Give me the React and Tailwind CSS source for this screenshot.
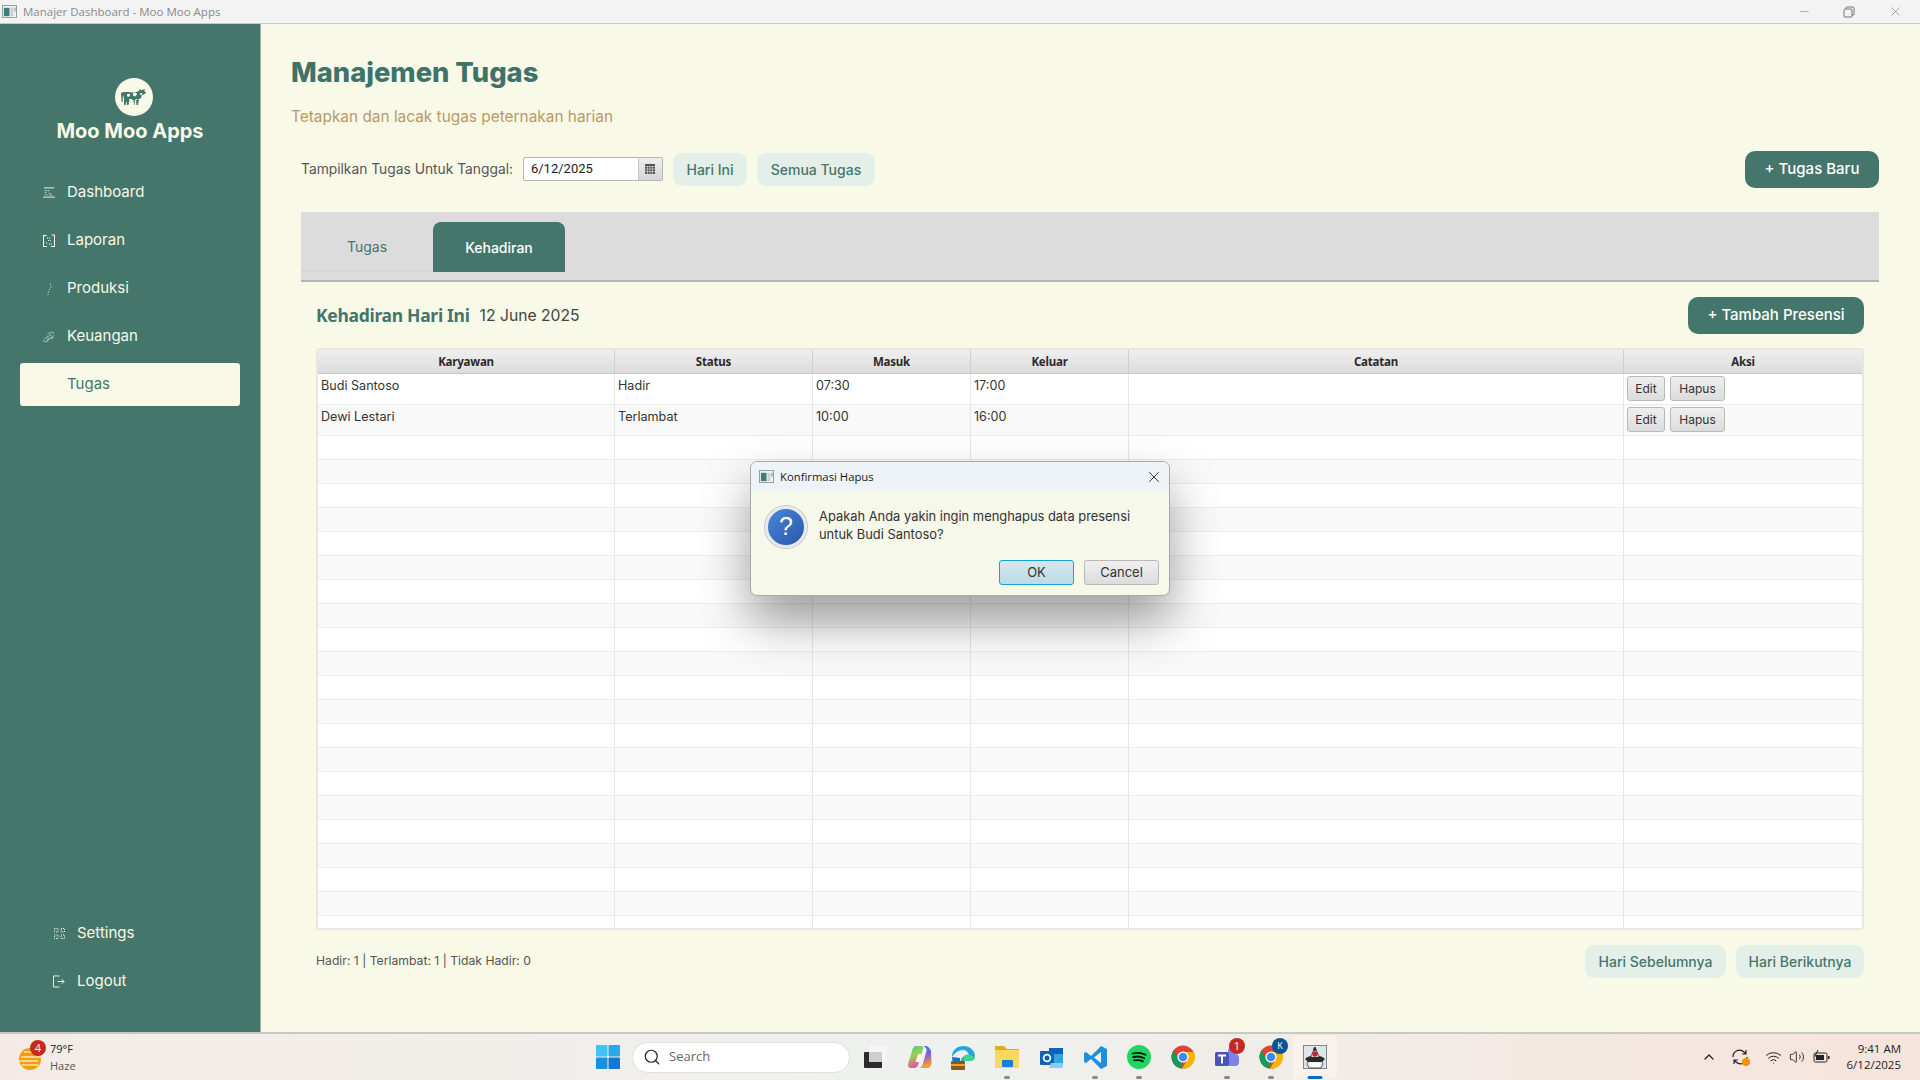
import React from 'react';
import { Minus, X, Search, ChevronUp, Wifi, Volume2 } from 'lucide-react';

const P = '[font-family:Inter,sans-serif]';

function AppIcon({ size = 16 }) {
  return (
    <svg width={size} height={size * 0.87} viewBox="0 0 16 14" className="shrink-0">
      <rect x="0.5" y="0.5" width="15" height="13" fill="#f0f2f2" stroke="#8d9a9a" />
      <rect x="2" y="3" width="6" height="9" fill="#3f7d78" />
      <rect x="9" y="3" width="3" height="9" fill="#c8d0d4" />
      <rect x="13" y="3" width="1.5" height="4" fill="#9aa7ab" />
    </svg>
  );
}

function Cow() {
  return (
    <svg width="27" height="20" viewBox="0 0 27 20">
      <path fill="#45766c" d="M1 6c1-1 3-1 5-1 4 0 7 1 10 0l3-1 1-2 1 1h2l1-1 1 0-1 2 2 1-1 2-3 1-1 3-2 1-1 6h-1.500l-.5-5-1 0-.5 5H14l-.5-5-4 0-1 5H7l-.5-4-1 4H4l0-7-1-3-.5 7H1.500z" />
      <path fill="#f8f9e6" d="M7 7h3v2l-2 1-1-1zM13 6l3-.5 1 2-2 2-2-1zM20 6h2v1.500l-1.500 1zM9 12h3v1H9zM15.500 12h2v1h-2z" />
    </svg>
  );
}

function NavIcon({ type }) {
  const c = '#f8f9e6';
  if (type === 'dashboard')
    return (
      <svg width="13" height="11" viewBox="0 0 13 11">
        <path d="M1 .5h11M0 10.500h13" stroke={c} strokeWidth="1" />
        <path d="M2 3.500h5M2 5.500h2M2 8h3M6 6.500h3M7 8.500h4" stroke={c} strokeWidth="1" strokeDasharray="1 .8" />
      </svg>
    );
  if (type === 'laporan')
    return (
      <svg width="12" height="13" viewBox="0 0 12 13">
        <path d="M.5 2v10.500h3.500M11.500 .5v12H8M0 1.500h3.500M8.500 1h3" stroke={c} fill="none" strokeWidth="1.100" />
        <path d="M4 4h4M5 6.500h3M3 9h2M6 10h3" stroke={c} strokeDasharray="1 .8" />
      </svg>
    );
  if (type === 'produksi')
    return (
      <svg width="6" height="12" viewBox="0 0 6 12">
        <path d="M4 1h1M4.500 4h1M3 6.500h1M2 9h1M1.500 11.500h1" stroke={c} strokeWidth=".9" />
      </svg>
    );
  if (type === 'keuangan')
    return (
      <svg width="13" height="12" viewBox="0 0 13 12">
        <path d="M0 10l3 1.500 4-3M1.500 8l5-3 3-2M5 3l4-2.500 3 1.500M4 9l6-3 2-2M9 8l3-2" stroke={c} strokeWidth="1" strokeDasharray="1.100 .7" fill="none" />
      </svg>
    );
  if (type === 'settings')
    return (
      <svg width="11" height="11" viewBox="0 0 11 11">
        <path d="M.5.500h3.500v3.500H.5zM7 .500h3.500v3.500H7zM.5 7h3.500v3.500H.5zM7 7h3.500v3.500H7z" stroke={c} strokeDasharray="1 1" fill="none" />
      </svg>
    );
  return (
    <svg width="13" height="13" viewBox="0 0 13 13">
      <path d="M7 .5H.5v12H7M5 6.500h7M9.500 4l2.500 2.500L9.500 9" stroke={c} fill="none" />
    </svg>
  );
}

function NavItem({ type, label, active }) {
  return (
    <div className={`flex h-[43px] items-center rounded-[3px] pl-[23px] gap-[12px] text-[15px] ${active ? 'bg-[#f8f9e6] text-[#45766c]' : 'text-[#f8f9e6]'}`}>
      <span className="flex w-[12px] justify-center">{type && <NavIcon type={type} />}</span>
      <span>{label}</span>
    </div>
  );
}

function Soft({ children, className = '' }) {
  return <div className={`flex h-[33px] items-center justify-center rounded-[9px] bg-[#e5efe9] text-[14px] font-medium text-[#45766c] ${className}`}>{children}</div>;
}

function Primary({ children, className = '' }) {
  return <div className={`flex h-[37px] items-center justify-center rounded-[10px] bg-[#45766c] text-[15px] font-medium text-white ${className}`}>{children}</div>;
}

const cols = ['w-[297px]', 'w-[198px]', 'w-[158px]', 'w-[158px]', 'w-[495px]', 'flex-1'];
const heads = ['Karyawan', 'Status', 'Masuk', 'Keluar', 'Catatan', 'Aksi'];
const rows = [
  ['Budi Santoso', 'Hadir', '07:30', '17:00', ''],
  ['Dewi Lestari', 'Terlambat', '10:00', '16:00', ''],
];

function MiniBtn({ children, className }) {
  return <div className={`flex h-[25px] items-center justify-center rounded-[3px] border border-[#b8b8b8] bg-gradient-to-b from-[#efefef] to-[#dcdcdc] text-[12px] text-[#333] ${className}`}>{children}</div>;
}

function Table() {
  return (
    <div className="mx-[15px] h-[582px] overflow-hidden rounded-[4px] border-2 border-[#e6e6e2] bg-white">
      <div className="flex h-[24px] border-b border-[#c8c8c8] bg-gradient-to-b from-[#efefef] to-[#dcdcdc]">
        {heads.map((h, i) => (
          <div key={h} className={`${cols[i]} flex items-center justify-center border-r border-[#cfcfcf] text-[11.5px] font-bold text-[#2d2a2a] [font-family:'Noto_Sans',sans-serif] tracking-[-0.2px] last:border-r-0`}>{h}</div>
        ))}
      </div>
      {rows.map((r, ri) => (
        <div key={ri} className={`flex h-[31px] border-b border-[#ececec] ${ri % 2 ? 'bg-[#f9f9f9]' : 'bg-white'}`}>
          {r.map((c, i) => (
            <div key={i} className={`${cols[i]} border-r border-[#e6e6e6] pl-[3px] pt-[3px] text-[12.6px] leading-[18px] text-[#333]`}>{c}</div>
          ))}
          <div className="flex flex-1 gap-[5px] pl-[3px] pt-[2px]">
            <MiniBtn className="w-[38px]">Edit</MiniBtn>
            <MiniBtn className="w-[55px]">Hapus</MiniBtn>
          </div>
        </div>
      ))}
      {Array.from({ length: 21 }).map((_, ri) => (
        <div key={ri} className={`flex h-[24px] border-b border-[#ececec] ${ri % 2 ? 'bg-[#f9f9f9]' : 'bg-white'}`}>
          {cols.map((w, i) => (
            <div key={i} className={`${w} border-r border-[#e6e6e6] last:border-r-0`} />
          ))}
        </div>
      ))}
    </div>
  );
}

function Dialog() {
  return (
    <div className="absolute left-[750px] top-[461px] z-10 w-[420px] overflow-hidden rounded-[7px] border border-[#a9a9a9] bg-[#f6f8ea] shadow-[0_26px_50px_rgba(0,0,0,0.38)]">
      <div className="flex h-[30px] items-center bg-[#eef3f7] pl-[8px] pr-[6px]">
        <AppIcon size={15} />
        <span className="ml-[6px] text-[11.3px] text-[#1a1a1a] [font-family:'Open_Sans',sans-serif]">Konfirmasi Hapus</span>
        <X className="ml-auto text-[#222]" size={18} strokeWidth={1.2} />
      </div>
      <div className="flex h-[57px] items-start pl-[14px] pt-[14px]">
        <div className="flex h-[42px] w-[42px] shrink-0 items-center justify-center rounded-full border-[3px] border-[#e6e8ee] bg-gradient-to-br from-[#4a86d8] to-[#2b57ab] text-[25px] text-white [font-family:'Liberation_Sans',sans-serif] shadow-[0_0_0_1px_#c3c6cc]">?</div>
        <div className="ml-[12px] pt-[2px] text-[12.9px] leading-[18px] text-[#333]">
          <div>Apakah Anda yakin ingin menghapus data presensi</div>
          <div>untuk Budi Santoso?</div>
        </div>
      </div>
      <div className="flex justify-end gap-[10px] pr-[10px] pb-[10px] pt-[11px]">
        <div className="flex h-[25px] w-[75px] items-center justify-center rounded-[3px] border border-[#16a2d8] bg-gradient-to-b from-[#d4e7ee] to-[#bddbe7] text-[13px] text-[#333]">OK</div>
        <div className="flex h-[25px] w-[75px] items-center justify-center rounded-[3px] border border-[#b8b8b8] bg-gradient-to-b from-[#f0f0f0] to-[#dcdcdc] text-[13px] text-[#333]">Cancel</div>
      </div>
    </div>
  );
}

function TaskSlot({ children, dot, active }) {
  return (
    <div className={`relative flex h-[44px] w-[44px] items-center justify-center rounded-[4px] ${active ? 'bg-[#fbf1eb]' : ''}`}>
      {children}
      {dot && <span className="absolute bottom-[0px] left-1/2 h-[3px] w-[6px] -translate-x-1/2 rounded-full bg-[#8a8a8a]" />}
      {active && <span className="absolute bottom-[0px] left-1/2 h-[3px] w-[15px] -translate-x-1/2 rounded-full bg-[#0a6cc4]" />}
    </div>
  );
}

function Chrome() {
  return (
    <svg width="24" height="24" viewBox="0 0 24 24">
      <circle cx="12" cy="12" r="11.500" fill="#db4437" />
      <path d="M12 7h10.800A11.500 11.500 0 0 1 11 23.500L16.300 14.500z" fill="#f4b400" />
      <path d="M12 12 11 23.500A11.500 11.500 0 0 1 2.500 5.500L7.700 14.500z" fill="#0f9d58" />
      <circle cx="12" cy="12" r="5.600" fill="#fff" />
      <circle cx="12" cy="12" r="4.300" fill="#4285f4" />
    </svg>
  );
}

function Taskbar() {
  return (
    <div className="relative flex h-[48px] items-center border-t-2 border-[#c9c8c3] bg-gradient-to-r from-[#f4ebe6] via-[#eef1ee] to-[#f6e4dc] [font-family:'Open_Sans',sans-serif]">
      <div className="flex w-[583px] shrink-0 items-center pl-[18px]">
        <div className="relative h-[30px] w-[33px]">
          <svg width="24" height="24" viewBox="0 0 24 24" className="absolute left-0 top-[5px]">
            <circle cx="12" cy="12" r="11" fill="#f39c12" />
            <path d="M6 5h14M3 10h20M0 14h20M4 18h16" stroke="#f7e8b0" strokeWidth="1.600" />
          </svg>
          <span className="absolute left-[12px] top-[-2px] flex h-[16px] w-[16px] items-center justify-center rounded-full bg-[#c42b1c] text-[11px] text-white">4</span>
        </div>
        <div className="ml-[-1px] text-[11px] leading-[17px] text-[#222]">
          <div>79°F</div>
          <div className="text-[#555]">Haze</div>
        </div>
      </div>
      <div className="flex w-[49px] justify-center">
        <svg width="24" height="24" viewBox="0 0 24 24">
          <rect x="0" y="0" width="11.500" height="11.500" rx="1" fill="#3cc5f5" />
          <rect x="12.500" y="0" width="11.500" height="11.500" rx="1" fill="#29a8ea" />
          <rect x="0" y="12.500" width="11.500" height="11.500" rx="1" fill="#1a8fdf" />
          <rect x="12.500" y="12.500" width="11.500" height="11.500" rx="1" fill="#0f78d4" />
        </svg>
      </div>
      <div className="flex h-[31px] w-[218px] items-center rounded-full border border-[#e0e0de] bg-white pl-[10px] text-[13px] text-[#666]">
        <Search size={18} strokeWidth={1.600} className="text-[#222]" />
        <span className="ml-[8px]">Search</span>
      </div>
      <div className="ml-[3px] flex">
        <TaskSlot>
          <svg width="24" height="24" viewBox="0 0 24 24">
            <rect x="6" y="1" width="18" height="16" fill="#f6f6f6" />
            <rect x="1" y="7" width="18" height="16" rx="1" fill="#2b2b2b" />
            <rect x="6" y="7" width="13" height="10" fill="#cfcfcf" />
          </svg>
        </TaskSlot>
        <TaskSlot>
          <svg width="25" height="24" viewBox="0 0 25 24">
            <defs>
              <linearGradient id="copA" x1="0" y1="0" x2="0.3" y2="1">
                <stop offset="0" stopColor="#3fc8a0" />
                <stop offset=".5" stopColor="#9ad24a" />
                <stop offset="1" stopColor="#e94fa0" />
              </linearGradient>
              <linearGradient id="copB" x1="0" y1="0" x2="0.2" y2="1">
                <stop offset="0" stopColor="#1d86e0" />
                <stop offset=".5" stopColor="#8a5ae0" />
                <stop offset="1" stopColor="#f7a02a" />
              </linearGradient>
            </defs>
            <path d="M9 1h5c2 0 2.500 1.500 2 3l-5 16c-.6 2-2 3-4 3H4C1.500 23 .5 21 1 19L5 6c.7-3 2-5 4-5z" fill="url(#copA)" />
            <path d="M15 1h3c3 0 5 2 6 5l.5 12c.2 3-2 5-4 5h-9c2 0 3.500-1.500 4-3l4-14c.5-2-.5-4-3.500-5z" fill="url(#copB)" />
            <path d="M11 9h5l-2.500 8h-5z" fill="#f6f2f5" />
          </svg>
        </TaskSlot>
        <TaskSlot>
          <svg width="25" height="25" viewBox="0 0 25 25">
            <path d="M1 12C1 5 6 1 12.500 1S24 6 24 11c0 4-3 5-6 5H10c0-4 4-6 8-6-1-3-3-5-6-5-5 0-8 3-11 7z" fill="#27a4d8" />
            <path d="M13 11c2-2 6-2 8 0l3 1c0 3-3 4-6 4h-6z" fill="#4ad08e" />
            <path d="M1 12c0 6 4 11 8 12l0-11z" fill="#1b6fc2" />
            <rect x="0" y="16" width="14" height="9" rx="1" fill="#8a5a1c" />
            <rect x="0" y="19" width="14" height="2" fill="#e2a33c" />
          </svg>
        </TaskSlot>
        <TaskSlot dot>
          <svg width="26" height="24" viewBox="0 0 26 24">
            <path d="M1 1h9l3 3h12v19H1z" fill="#e0a92a" />
            <path d="M1 5h24v18H1z" fill="#fbd85d" />
            <rect x="8" y="15" width="11" height="7" rx="1" fill="#1b7ed6" />
          </svg>
        </TaskSlot>
        <TaskSlot>
          <svg width="25" height="25" viewBox="0 0 25 25">
            <path d="M10 3h11l3 3v12H10z" fill="#2ca8e8" />
            <path d="M10 3h14v6H10z" fill="#0f62b8" />
            <rect x="1" y="6" width="14" height="14" rx="1" fill="#0f62b8" />
            <circle cx="8" cy="13" r="3.400" fill="none" stroke="#fff" strokeWidth="1.800" />
            <path d="M12 18h12v3a2 2 0 0 1-2 2H10z" fill="#7ed3f7" />
          </svg>
        </TaskSlot>
        <TaskSlot dot>
          <svg width="25" height="25" viewBox="0 0 25 25">
            <path d="M18 1 24 4v17l-6 3L8 14l-5 4-2-1V8l2-1 5 4z" fill="#1e8fdc" />
            <path d="M18 7 11 12.500 18 18z" fill="#f4f6f4" />
          </svg>
        </TaskSlot>
        <TaskSlot dot>
          <svg width="24" height="24" viewBox="0 0 24 24">
            <circle cx="12" cy="12" r="12" fill="#1ed760" />
            <path d="M5.500 8.500c4-1 9-.8 13 1.300M6.200 12c3.500-.8 8-.5 11 1.200M7 15.400c3-.6 6.500-.4 9 1" stroke="#111" strokeWidth="1.800" strokeLinecap="round" fill="none" />
          </svg>
        </TaskSlot>
        <TaskSlot><Chrome /></TaskSlot>
        <TaskSlot dot>
          <svg width="26" height="24" viewBox="0 0 26 24">
            <circle cx="18" cy="6" r="4" fill="#7b83eb" />
            <rect x="13" y="9" width="12" height="12" rx="4" fill="#7b83eb" />
            <rect x="1" y="7" width="14" height="14" rx="1.500" fill="#4b53bc" />
            <path d="M4 10.500h8M8 10.500v8" stroke="#fff" strokeWidth="2" />
          </svg>
          <span className="absolute right-[4px] top-[3px] flex h-[16px] w-[16px] items-center justify-center rounded-full bg-[#c42b1c] text-[11px] text-white">1</span>
        </TaskSlot>
        <TaskSlot dot>
          <Chrome />
          <span className="absolute right-[5px] top-[3px] flex h-[16px] w-[16px] items-center justify-center rounded-full bg-[#0b5394] text-[9px] text-white">K</span>
        </TaskSlot>
        <TaskSlot active>
          <svg width="24" height="24" viewBox="0 0 24 24">
            <rect x=".5" y=".5" width="23" height="23" fill="#dfe5ea" stroke="#7c8a90" />
            <path d="M12 2 15 9l5 10-2 4H6l-2-4L9 9z" fill="#f0f0f0" stroke="#333" strokeWidth=".8" />
            <path d="M10.500 3 12 2l1.500 3.500-3 .5z" fill="#222" />
            <circle cx="12" cy="9" r="2.800" fill="#c8242b" />
            <path d="M2 14c3-3 5-3.500 8-2l4 0c3-1.500 5-1 8 2l-3 3H5z" fill="#2a2a2a" />
            <path d="M7 18h10v4H7z" fill="#fafafa" />
          </svg>
        </TaskSlot>
      </div>
      <div className="ml-auto flex items-center pr-[19px] text-[#1d1d1d]">
        <ChevronUp size={16} strokeWidth={1.800} className="mr-[14px]" />
        <div className="relative mr-[16px] h-[18px] w-[18px]">
          <svg width="18" height="18" viewBox="0 0 18 18" fill="none" stroke="#222" strokeWidth="1.200">
            <path d="M2 9a6.500 6.500 0 0 1 11-5l2 2M15 2v4h-4M16 9a6.500 6.500 0 0 1-11 5l-2-2M3 16v-4h4" />
          </svg>
          <span className="absolute bottom-[0px] right-[-1px] h-[8px] w-[8px] rounded-full bg-[#f59300]" />
        </div>
        <Wifi size={17} strokeWidth={1.400} className="mr-[7px]" />
        <Volume2 size={16} strokeWidth={1.300} className="mr-[8px]" />
        <svg width="17" height="14" viewBox="0 0 17 14" className="mr-[17px]">
          <rect x="1" y="3" width="13" height="9" rx="1.500" fill="none" stroke="#222" />
          <rect x="3" y="5" width="8" height="5" fill="#222" />
          <rect x="15" y="6" width="1.500" height="3" fill="#222" />
          <path d="M5 0 2 6h3L3 10" stroke="#222" fill="none" />
        </svg>
        <div className="text-right text-[11.5px] leading-[16px]">
          <div>9:41 AM</div>
          <div>6/12/2025</div>
        </div>
      </div>
    </div>
  );
}

export default function App() {
  return (
    <div className={`relative flex h-[1080px] w-[1920px] flex-col overflow-hidden bg-[#f8f9e6] ${P}`}>
      <div className="flex h-[24px] shrink-0 items-center border-b border-[#c8c8c8] bg-[#f3f3f3] pl-[2px] [font-family:'Open_Sans',sans-serif]">
        <AppIcon size={15} />
        <span className="ml-[6px] text-[11.5px] text-[#8a8a8a]">Manajer Dashboard - Moo Moo Apps</span>
        <div className="ml-auto flex items-center text-[#777]">
          <Minus size={13} strokeWidth={1} className="mr-[32px]" />
          <svg width="12" height="12" viewBox="0 0 12 12" fill="none" stroke="#777" className="mr-[33px]">
            <rect x="1" y="3" width="8" height="8" rx="1" />
            <path d="M3 3V1.500A.5.5 0 0 1 3.500 1H10a1 1 0 0 1 1 1v6.500a.5.5 0 0 1-.5.5H9" />
          </svg>
          <X size={15} strokeWidth={1} className="mr-[17px]" />
        </div>
      </div>
      <div className="flex min-h-0 flex-1">
        <aside className="flex w-[261px] shrink-0 flex-col border-r border-[#9fb3ab] bg-[#45766c] px-[20px]">
          <div className="flex flex-col items-center pl-[7px] pt-[54px]">
            <div className="flex h-[38px] w-[38px] items-center justify-center rounded-full bg-[#f8f9e6]">
              <Cow />
            </div>
            <div className="-ml-[7px] mt-[1px] text-[20px] font-bold leading-[28px] text-[#f8f9e6]">Moo Moo Apps</div>
          </div>
          <nav className="mt-[26px] flex flex-col gap-[5px]">
            <NavItem type="dashboard" label="Dashboard" />
            <NavItem type="laporan" label="Laporan" />
            <NavItem type="produksi" label="Produksi" />
            <NavItem type="keuangan" label="Keuangan" />
            <NavItem label="Tugas" active />
          </nav>
          <div className="mt-auto mb-[29px] flex flex-col gap-[5px] pl-[10px]">
            <NavItem type="settings" label="Settings" />
            <NavItem type="logout" label="Logout" />
          </div>
        </aside>
        <main className="relative flex min-w-0 flex-1 flex-col pl-[30px] pr-[41px]">
          <h1 className="mt-[30px] text-[27.3px] font-extrabold leading-[38px] text-[#3f736a]">Manajemen Tugas</h1>
          <p className="mt-[14px] text-[15.4px] leading-[22px] text-[#b9986c]">Tetapkan dan lacak tugas peternakan harian</p>
          <div className="ml-[10px] mt-[22px] flex h-[38px] items-center">
            <span className="text-[13.8px] text-[#555]">Tampilkan Tugas Untuk Tanggal:</span>
            <div className="ml-[10px] flex h-[24px] w-[140px] items-center overflow-hidden rounded-[2px] border border-[#b5b5b5] bg-white">
              <span className="flex-1 pl-[7px] text-[13px] text-[#222] [font-family:Roboto,sans-serif]">6/12/2025</span>
              <span className="flex h-full w-[24px] items-center justify-center border-l border-[#c5c5c5] bg-gradient-to-b from-[#eeeeee] to-[#d5d5d5]">
                <svg width="10" height="10" viewBox="0 0 10 10"><rect width="10" height="10" fill="#555" /><path d="M0 2.500h10M0 5h10M0 7.500h10M2.500 2v8M5 2v8M7.500 2v8" stroke="#ddd" strokeWidth=".6" /></svg>
              </span>
            </div>
            <Soft className="ml-[10px] w-[74px]">Hari Ini</Soft>
            <Soft className="ml-[10px] w-[118px]">Semua Tugas</Soft>
            <Primary className="ml-auto w-[134px]">+ Tugas Baru</Primary>
          </div>
          <div className="ml-[10px] mt-[24px] h-[70px] border-b-2 border-[#b5b5b5] bg-[#dcdcdc] pt-[10px]">
            <div className="flex h-[50px]">
              <div className="flex w-[132px] items-center justify-center border-b-2 border-[#d3d6de] text-[14px] text-[#45766c]">Tugas</div>
              <div className="flex w-[132px] items-center justify-center rounded-t-[8px] bg-[#45766c] text-[14px] font-medium text-white">Kehadiran</div>
            </div>
          </div>
          <div className="ml-[10px] flex flex-col">
            <div className="mt-[15px] flex h-[37px] items-center px-[15px]">
              <span className="text-[17.5px] font-bold text-[#45766c] [font-family:'Noto_Sans',sans-serif] tracking-[-0.3px]">Kehadiran Hari Ini</span>
              <span className="ml-[10px] text-[15.7px] text-[#444]">12 June 2025</span>
              <Primary className="ml-auto w-[176px]">+ Tambah Presensi</Primary>
            </div>
            <div className="mt-[14px]"><Table /></div>
            <div className="mt-[15px] flex h-[33px] items-center px-[15px]">
              <span className="text-[12.2px] text-[#555]">Hadir: 1 | Terlambat: 1 | Tidak Hadir: 0</span>
              <Soft className="ml-auto w-[141px]">Hari Sebelumnya</Soft>
              <Soft className="ml-[10px] w-[128px]">Hari Berikutnya</Soft>
            </div>
          </div>
        </main>
      </div>
      <Taskbar />
      <Dialog />
    </div>
  );
}
